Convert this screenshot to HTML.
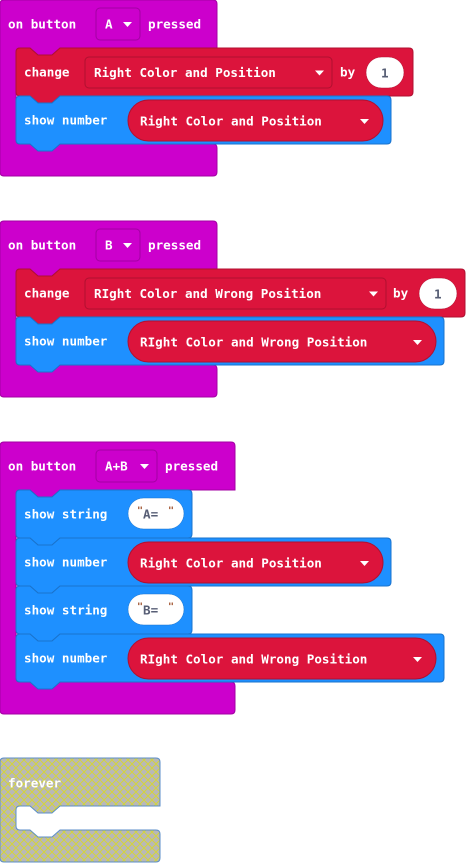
<!DOCTYPE html>
<html><head><meta charset="utf-8"><style>
html,body{margin:0;padding:0;background:#fff;width:466px;height:863px;overflow:hidden}
svg{display:block}
text{font-family:"DejaVu Sans Mono","Liberation Mono",monospace;font-weight:bold;font-size:12.5px;fill:#fff;dominant-baseline:central}
</style></head><body>
<svg id="s" width="466" height="863" xmlns="http://www.w3.org/2000/svg">
<defs>
<pattern id="hatch" width="8" height="8" patternUnits="userSpaceOnUse">
<rect width="8" height="8" fill="#b8b8b8"/>
<path d="M0,0 L8,8 M8,0 L0,8" stroke="#d4d43a" stroke-width="1"/>
</pattern>
</defs>
</svg>
<script>
const s=document.getElementById('s');let h='';
function hat(y,w,innerH,fill,stroke){
 const iy=y+48, by=y+48+innerH;
 h+=`<path d="M0,${y+4} q0,-4 4,-4 H${w-4} q4,0 4,4 V${iy} H60 l-8,7 h-14 l-8,-7 H20 q-4,0 -4,4 V${by-4} q0,4 4,4 H${w-4} q4,0 4,4 V${by+28} q0,4 -4,4 H4 q-4,0 -4,-4 Z" fill="${fill}" stroke="${stroke}" stroke-width="1"/>`;
}
function stmt(y,w,fill,stroke){
 const x=16,H=48;
 h+=`<path d="M${x},${y+4} q0,-4 4,-4 H30 l8,7 h14 l8,-7 H${x+w-4} q4,0 4,4 V${y+H-4} q0,4 -4,4 H60 l-8,7 h-14 l-8,-7 H${x+4} q-4,0 -4,-4 Z" fill="${fill}" stroke="${stroke}" stroke-width="1"/>`;
}
function t(x,y,s,c){const L=(s.length*7.58).toFixed(1);h+=`<text x="${x}" y="${y}" textLength="${L}" lengthAdjust="spacingAndGlyphs"${c?` style="fill:${c}"`:''}>${s}</text>`;}
function dd(x,y,w,hh,fill,stroke,label){
 h+=`<rect x="${x}" y="${y}" width="${w}" height="${hh}" rx="4" fill="${fill}" stroke="${stroke}"/>`;
 t(x+9,y+hh/2,label);
 const ax=x+w-17,ay=y+hh/2-2;
 h+=`<path d="M${ax},${ay} h9 l-4.5,5 z" fill="#fff"/>`;
}
function pill(x,y,w,label){
 h+=`<rect x="${x}" y="${y}" width="${w}" height="41" rx="20.5" fill="#dc143c" stroke="#b01030"/>`;
 t(x+12,y+21,label);
 const ax=x+w-23,ay=y+19;
 h+=`<path d="M${ax},${ay} h9 l-4.5,5 z" fill="#fff"/>`;
}
function num(x,y,w,label){
 h+=`<rect x="${x}" y="${y}" width="${w}" height="31" rx="15.5" fill="#fff" stroke="#b01030" stroke-width="0.5"/>`;
 t(x+w/2-4,y+16,label,'#575e75');
}
function str(x,y,w,label){
 h+=`<rect x="${x}" y="${y}" width="${w}" height="31" rx="15.5" fill="#fff" stroke="#1a73cc" stroke-width="0.5"/>`;
 h+=`<text x="${x+9}" y="${y+13}" style="fill:#a0522d;font-size:10px">"</text>`;
 t(x+15,y+16,label,'#575e75');
 h+=`<text x="${x+w-16}" y="${y+13}" style="fill:#a0522d;font-size:10px">"</text>`;
}
const P='#cc00cc',PS='#a300a3',R='#dc143c',RS='#b01030',B='#1e90ff',BS='#1a73cc';
hat(0,217,96,P,PS);
t(8,24,'on button');dd(96,8,44,32,P,PS,'A');t(148,24,'pressed');
stmt(48,397,R,RS);t(24,72,'change');dd(85,57,247,31,R,RS,'Right Color and Position');t(340,72,'by');num(366,57,38,'1');
stmt(96,375,B,BS);t(24,120,'show number');pill(128,100,255,'Right Color and Position');
hat(221,217,96,P,PS);
t(8,245,'on button');dd(96,229,44,32,P,PS,'B');t(148,245,'pressed');
stmt(269,449,R,RS);t(24,293,'change');dd(85,278,301,31,R,RS,'RIght Color and Wrong Position');t(393,293,'by');num(419,278,38,'1');
stmt(317,428,B,BS);t(24,341,'show number');pill(128,321,308,'RIght Color and Wrong Position');
hat(442,235,192,P,PS);
t(8,466,'on button');dd(96,450,61,32,P,PS,'A+B');t(165,466,'pressed');
stmt(490,176,B,BS);t(24,514,'show string');str(128,498,56,'A=');
stmt(538,375,B,BS);t(24,562,'show number');pill(128,542,255,'Right Color and Position');
stmt(586,176,B,BS);t(24,610,'show string');str(128,594,56,'B=');
stmt(634,428,B,BS);t(24,658,'show number');pill(128,638,308,'RIght Color and Wrong Position');
{const y=758,w=160;
h+=`<path d="M0,${y+4} q0,-4 4,-4 H${w-4} q4,0 4,4 V${y+48} H60 l-8,7 h-14 l-8,-7 H20 q-4,0 -4,4 V${y+68} q0,4 4,4 H30 l8,7 h14 l8,-7 H${w-4} q4,0 4,4 V${y+100} q0,4 -4,4 H4 q-4,0 -4,-4 Z" fill="url(#hatch)" stroke="#5b8ec9" stroke-width="1"/>`;
t(8,y+25,'forever');}
s.insertAdjacentHTML('beforeend',h);
</script>
</body></html>
